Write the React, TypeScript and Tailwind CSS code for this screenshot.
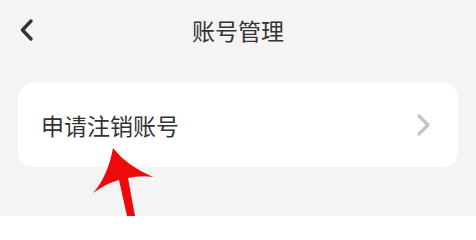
export default function App() {
  return (
    <div
      className="relative h-[216px] w-[476px] overflow-hidden bg-[#f4f4f4]"
      style={{ fontFamily: '"Noto Sans CJK SC", "Noto Sans", sans-serif' }}
    >
      <header className="flex h-[60px] items-center">
        <div className="flex w-[60px] items-center pl-[19px]">
          <svg width="15" height="22" viewBox="0 0 15 22" fill="none">
            <path
              d="M12 2 L3.5 11 L12 20"
              stroke="#333333"
              strokeWidth="3.4"
              strokeLinecap="round"
              strokeLinejoin="round"
            />
          </svg>
        </div>
        <h1 className="flex-1 text-center text-[23px] leading-none text-[#333333]">
          账号管理
        </h1>
        <div className="w-[60px]" />
      </header>

      <div className="mx-[18px] mt-[23px] flex h-[84px] items-center justify-between rounded-[15px] bg-white pl-[23px] pr-[27px]">
        <span className="text-[23px] leading-none text-[#333333]">申请注销账号</span>
        <svg width="15" height="24" viewBox="0 0 15 24" fill="none">
          <path
            d="M3 3 L12 12 L3 21"
            stroke="#c4c4c4"
            strokeWidth="3.2"
            strokeLinecap="round"
            strokeLinejoin="round"
          />
        </svg>
      </div>

      {/* red annotation arrow */}
      <svg
        className="absolute left-[80px] top-[140px]"
        width="90"
        height="76"
        viewBox="80 140 90 76"
      >
        <path
          d="M113 148 Q108 176 93 193 Q107 183 119 180 L127 216 L135 216 L128 178 Q140 175 153 177 Q127 166 113 148 Z"
          fill="#ee0a0a"
        />
      </svg>
    </div>
  );
}
